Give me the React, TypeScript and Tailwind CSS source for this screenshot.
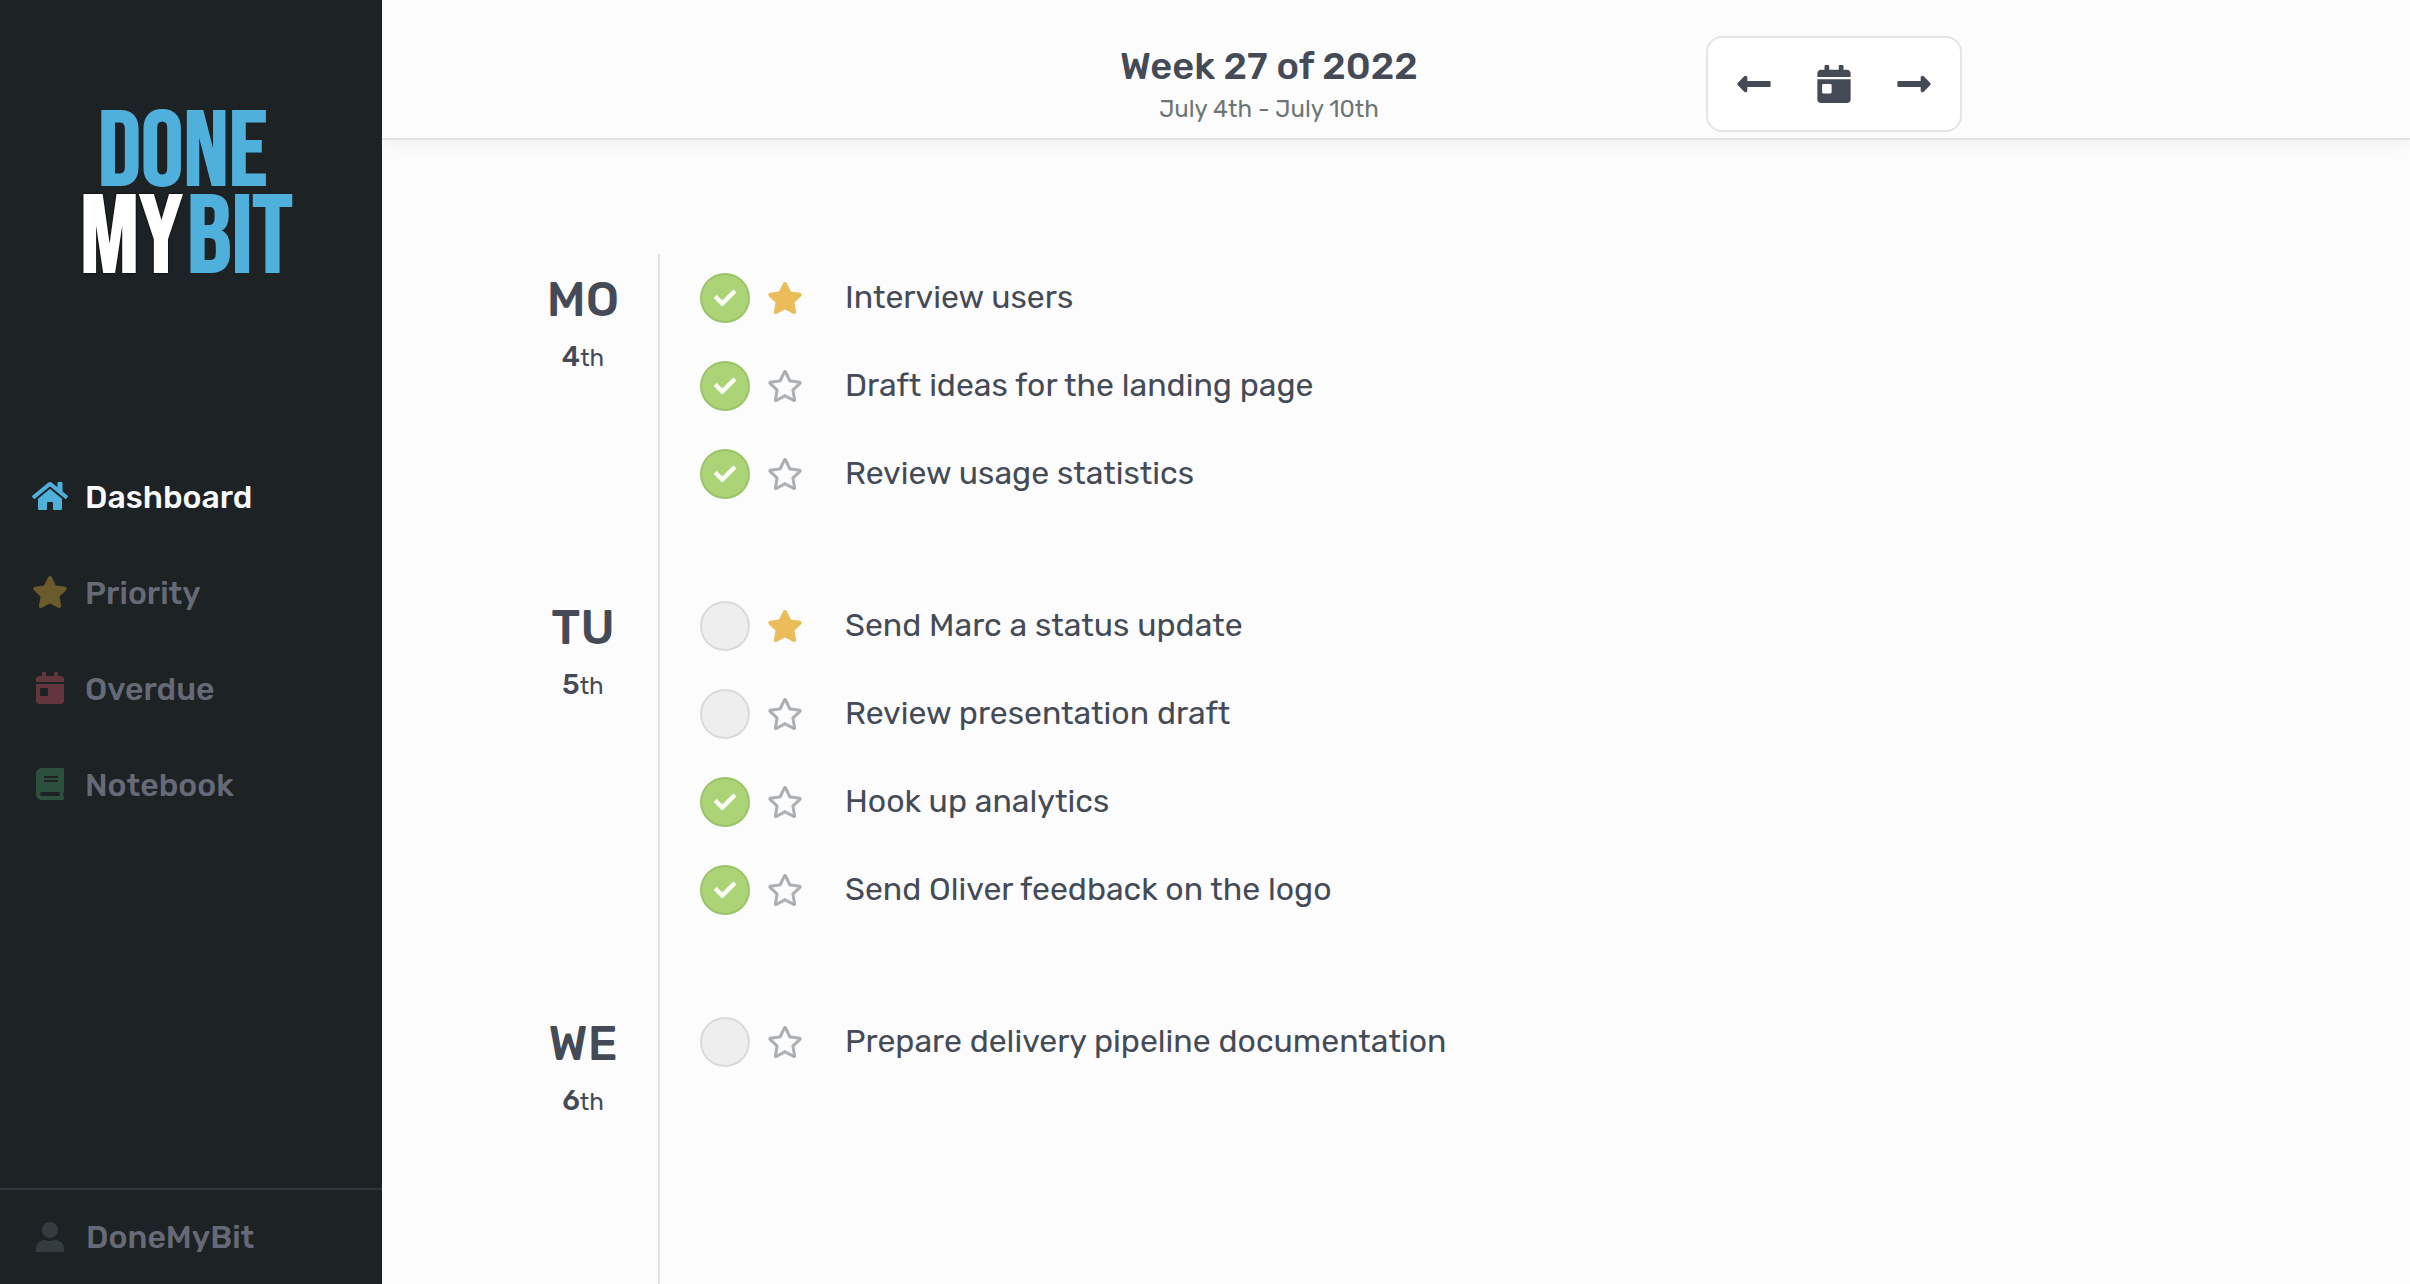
import React from 'react';

import clsx from 'clsx';
import {
  FaBook,
  FaCalendarDay,
  FaCheck,
  FaHome,
  FaLongArrowAltLeft,
  FaLongArrowAltRight,
  FaRegStar,
  FaStar,
  FaUser,
} from 'react-icons/fa';

interface ITask {
  title: string;
  done: boolean;
  starred: boolean;
}

interface IDay {
  name: string;
  date: number;
  tasks: ITask[];
}

const navItems = [
  { label: 'Dashboard', icon: FaHome, iconClass: 'size-9 text-[#50b0dc]', active: true },
  { label: 'Priority', icon: FaStar, iconClass: 'size-9 text-[#6b5a2c]', active: false },
  { label: 'Overdue', icon: FaCalendarDay, iconClass: 'size-8 text-[#63363b]', active: false },
  { label: 'Notebook', icon: FaBook, iconClass: 'size-8 text-[#2d503e]', active: false },
];

const initialDays: IDay[] = [
  {
    name: 'MO',
    date: 4,
    tasks: [
      { title: 'Interview users', done: true, starred: true },
      { title: 'Draft ideas for the landing page', done: true, starred: false },
      { title: 'Review usage statistics', done: true, starred: false },
    ],
  },
  {
    name: 'TU',
    date: 5,
    tasks: [
      { title: 'Send Marc a status update', done: false, starred: true },
      { title: 'Review presentation draft', done: false, starred: false },
      { title: 'Hook up analytics', done: true, starred: false },
      { title: 'Send Oliver feedback on the logo', done: true, starred: false },
    ],
  },
  {
    name: 'WE',
    date: 6,
    tasks: [{ title: 'Prepare delivery pipeline documentation', done: false, starred: false }],
  },
];

const Logo: React.FC = () => (
  <svg
    viewBox="0 0 220 168"
    className="w-[220px] h-[168px] overflow-visible font-['Bebas_Neue','Roboto_Condensed',sans-serif]"
    role="img"
    aria-label="DoneMyBit"
    strokeWidth="2"
  >
    <text x="18" y="79" fontSize="106" fill="#50b0dc" stroke="#50b0dc">
      DONE
    </text>
    <text
      x="0"
      y="166"
      fontSize="110"
      fill="#ffffff"
      stroke="#ffffff"
      className="[filter:drop-shadow(0_0_1px_#000)]"
    >
      MY
    </text>
    <text x="107" y="166" fontSize="110" fill="#50b0dc" stroke="#50b0dc">
      BIT
    </text>
  </svg>
);

const Sidebar: React.FC = () => (
  <aside className="sticky top-0 flex h-screen w-[382px] shrink-0 flex-col bg-[#1d2224] font-medium">
    <div className="pl-20 pt-[106px]">
      <Logo />
    </div>
    <nav className="mt-[174px] flex flex-col">
      {navItems.map(({ label, icon: Icon, iconClass, active }) => (
        <a
          href="#"
          key={label}
          className={clsx('flex h-24 items-center gap-[17px] pl-8', active ? 'text-[#f8f9fb]' : 'text-[#666a76]')}
        >
          <span className="flex w-9 justify-center">
            <Icon className={iconClass} />
          </span>
          <span className="pt-0.5">{label}</span>
        </a>
      ))}
    </nav>
    <a href="#" className="mt-auto flex h-24 items-center gap-[18px] border-t-2 border-[#30373a] pl-8 text-[#666a76]">
      <span className="flex h-[30px] w-9 justify-center overflow-hidden text-[#343c40]">
        <FaUser className="size-8 shrink-0" />
      </span>
      <span className="h-[30px] overflow-hidden leading-[30px]">DoneMyBit</span>
    </a>
  </aside>
);

const WeekHeader: React.FC = () => (
  <header className="grid h-[140px] grid-cols-[1fr_auto_1fr] border-b-2 border-[#e2e2e2] pl-[194px] pr-[448px] shadow-[0_4px_16px_rgba(0,0,0,0.05)]">
    <div className="col-start-2 pt-11 text-center">
      <h1 className="text-[38px] leading-11 font-medium">Week 27 of 2022</h1>
      <p className="text-2xl leading-[42px] text-[#6d7575]">July 4th - July 10th</p>
    </div>
    <div className="mt-9 flex h-24 w-64 items-center justify-between justify-self-end rounded-2xl border-2 border-[#e4e4e4] bg-white px-[27px]">
      <button type="button" aria-label="Previous week">
        <FaLongArrowAltLeft className="size-[38px]" />
      </button>
      <button type="button" aria-label="Current week">
        <FaCalendarDay className="size-[38px]" />
      </button>
      <button type="button" aria-label="Next week">
        <FaLongArrowAltRight className="size-[38px]" />
      </button>
    </div>
  </header>
);

interface ITaskRow {
  id: string;
  task: ITask;
  onChange: (task: ITask) => void;
}

const TaskRow: React.FC<ITaskRow> = ({ id, task, onChange }) => (
  <li className="flex h-22 items-center">
    <div className="grid shrink-0 place-items-center">
      <input
        type="checkbox"
        id={id}
        checked={task.done}
        onChange={(e) => onChange({ ...task, done: e.target.checked })}
        className="col-start-1 row-start-1 size-[50px] cursor-pointer appearance-none rounded-full border-2 border-[#dadada] bg-[#eeeeee] checked:border-[#9cc46a] checked:bg-[#acd476]"
      />
      {task.done && <FaCheck className="pointer-events-none col-start-1 row-start-1 size-[22px] text-[#fafdf5]" />}
    </div>
    <button
      type="button"
      aria-label={task.starred ? 'Remove star' : 'Add star'}
      className="ml-[17px] shrink-0 cursor-pointer"
      onClick={() => onChange({ ...task, starred: !task.starred })}
    >
      {task.starred ? <FaStar className="size-9 text-[#ebbc5a]" /> : <FaRegStar className="size-9 text-[#a9afb3]" />}
    </button>
    <label htmlFor={id} className="ml-[42px] cursor-pointer pb-0.5">
      {task.title}
    </label>
  </li>
);

const App: React.FC = () => {
  const [days, setDays] = React.useState<IDay[]>(initialDays);

  function updateTask(dayIndex: number, taskIndex: number, next: ITask) {
    setDays((prev) =>
      prev.map((day, d) =>
        d === dayIndex ? { ...day, tasks: day.tasks.map((task, t) => (t === taskIndex ? next : task)) } : day
      )
    );
  }

  return (
    <div className="flex min-h-screen bg-[#fcfcfc] font-['Rubik','Inter',sans-serif] text-[32px] leading-10 text-[#454b56]">
      <Sidebar />
      <div className="flex min-w-0 grow flex-col">
        <WeekHeader />
        <main className="flex grow flex-col pl-[126px] pt-[114px]">
          {days.map((day, dayIndex) => (
            <section key={day.name} className="flex last:grow">
              <div className="w-[150px] shrink-0 pt-4 text-center">
                <h2 className="text-5xl leading-15 font-medium">{day.name}</h2>
                <p className="mt-1 text-2xl leading-[46px]">
                  <span className="text-[28px] font-medium">{day.date}</span>th
                </p>
              </div>
              <ul className="grow border-l-2 border-[#e2e2e2] pb-16 pl-10">
                {day.tasks.map((task, taskIndex) => (
                  <TaskRow
                    key={taskIndex}
                    id={`task-${dayIndex}-${taskIndex}`}
                    task={task}
                    onChange={(next) => updateTask(dayIndex, taskIndex, next)}
                  />
                ))}
              </ul>
            </section>
          ))}
        </main>
      </div>
    </div>
  );
};

export default App;
